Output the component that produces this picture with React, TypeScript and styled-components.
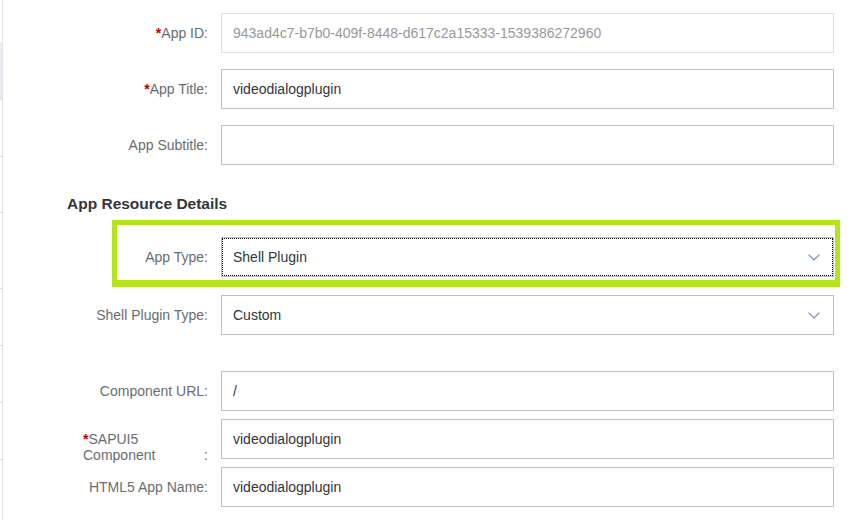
import React from "react";
import styled, { createGlobalStyle } from "styled-components";

const Global = createGlobalStyle`
  html, body { margin: 0; padding: 0; background: #ffffff; }
  body { font-family: "Liberation Sans", Arial, sans-serif; }
  #root { height: 520px; overflow: hidden; }
`;

const Page = styled.div`
  display: flex;
  height: 520px;
  width: 851px;
  background: #fff;
`;

const Sidebar = styled.div`
  width: 2px;
  border-right: 1px solid #e4e4e4;
  display: flex;
  flex-direction: column;
  flex: none;
`;

const SideItem = styled.div<{ $h: number; $active?: boolean; $tick?: boolean }>`
  height: ${(p) => p.$h}px;
  flex: none;
  box-sizing: border-box;
  background: ${(p) => (p.$active ? "#e5eef7" : "transparent")};
  border-bottom: ${(p) => (p.$tick ? "1px solid #dcdcdc" : "none")};
`;

const Content = styled.div`
  flex: 1;
  display: flex;
  flex-direction: column;
  padding: 13px 17px 0 0;
`;

const Row = styled.div<{ $top: number }>`
  position: relative;
  display: grid;
  grid-template-columns: 1fr 613px;
  column-gap: 13px;
  align-items: center;
  margin-top: ${(p) => p.$top}px;
`;

const Label = styled.label`
  justify-self: end;
  font-size: 14px;
  line-height: 16px;
  color: #6a6d70;
  white-space: nowrap;
`;

const Star = styled.span`
  color: #bb0000;
  font-weight: bold;
`;

const WrapLabel = styled.label`
  justify-self: end;
  align-self: start;
  margin: 12px 0 -4px;
  width: 125px;
  display: flex;
  align-items: flex-end;
  font-size: 14px;
  line-height: 16px;
  color: #6a6d70;
`;

const WrapText = styled.span`
  display: flex;
  flex-direction: column;
  margin-right: auto;
`;

const Line = styled.span`
  white-space: nowrap;
`;

const Colon = styled.span`
  flex: none;
  margin-left: auto;
`;

const Field = styled.div<{ $disabled?: boolean; $focused?: boolean }>`
  box-sizing: border-box;
  height: 40px;
  display: flex;
  align-items: center;
  padding: 0 13px 0 11px;
  border: 1px solid ${(p) => (p.$disabled ? "#dedede" : "#bfbfbf")};
  background: #fff;
  font-size: 14px;
  color: ${(p) => (p.$disabled ? "#989898" : "#32363a")};
  outline: ${(p) => (p.$focused ? "1px dotted #000" : "none")};
  outline-offset: -2px;
`;

const Value = styled.span`
  flex: 1;
  white-space: nowrap;
`;

const Heading = styled.h3`
  margin: 29px 0 0 64px;
  font-size: 15.5px;
  line-height: 20px;
  font-weight: bold;
  color: #32363a;
`;

const Highlight = styled.div`
  position: absolute;
  left: 109px;
  right: -6px;
  top: -17px;
  bottom: -10px;
  border: 5px solid #b5e31c;
  border-bottom-width: 7px;
  pointer-events: none;
`;

const Chevron = () => (
  <svg width="12" height="7" viewBox="0 0 12 7" fill="none">
    <polyline points="0.6,0.6 6,6 11.4,0.6" stroke="#6f8fb3" strokeWidth="1.2" />
  </svg>
);

const sideItems = [
  { h: 42 },
  { h: 58, active: true, tick: true },
  { h: 57, tick: true },
  { h: 56, tick: true },
  { h: 76, tick: true },
  { h: 57, tick: true },
  { h: 57, tick: true },
  { h: 57, tick: true },
  { h: 60 },
];

export default function App() {
  return (
    <>
      <Global />
      <Page>
        <Sidebar>
          {sideItems.map((s, i) => (
            <SideItem key={i} $h={s.h} $active={s.active} $tick={s.tick} />
          ))}
        </Sidebar>
        <Content>
          <Row $top={0}>
            <Label>
              <Star>*</Star>App ID:
            </Label>
            <Field $disabled>
              <Value>943ad4c7-b7b0-409f-8448-d617c2a15333-1539386272960</Value>
            </Field>
          </Row>
          <Row $top={16}>
            <Label>
              <Star>*</Star>App Title:
            </Label>
            <Field>
              <Value>videodialogplugin</Value>
            </Field>
          </Row>
          <Row $top={16}>
            <Label>App Subtitle:</Label>
            <Field>
              <Value></Value>
            </Field>
          </Row>
          <Heading>App Resource Details</Heading>
          <Row $top={23}>
            <Highlight />
            <Label>App Type:</Label>
            <Field $focused>
              <Value>Shell Plugin</Value>
              <Chevron />
            </Field>
          </Row>
          <Row $top={18}>
            <Label>Shell Plugin Type:</Label>
            <Field>
              <Value>Custom</Value>
              <Chevron />
            </Field>
          </Row>
          <Row $top={36}>
            <Label>Component URL:</Label>
            <Field>
              <Value>/</Value>
            </Field>
          </Row>
          <Row $top={8}>
            <WrapLabel>
              <WrapText>
                <Line>
                  <Star>*</Star>SAPUI5
                </Line>
                <Line>Component</Line>
              </WrapText>
              <Colon>:</Colon>
            </WrapLabel>
            <Field>
              <Value>videodialogplugin</Value>
            </Field>
          </Row>
          <Row $top={8}>
            <Label>HTML5 App Name:</Label>
            <Field>
              <Value>videodialogplugin</Value>
            </Field>
          </Row>
        </Content>
      </Page>
    </>
  );
}
